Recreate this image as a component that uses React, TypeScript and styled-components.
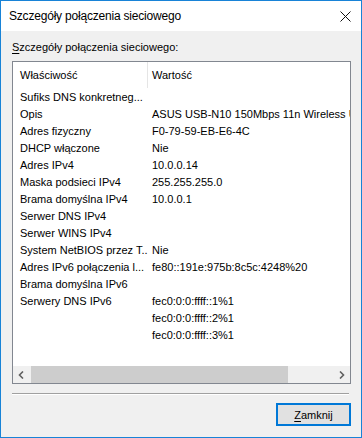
import React from "react";
import styled, { createGlobalStyle } from "styled-components";

const GlobalStyle = createGlobalStyle`
  html, body {
    margin: 0;
    padding: 0;
    background: #ffffff;
  }
  body {
    font-family: "Liberation Sans", Arial, sans-serif;
    font-size: 11px;
    color: #000;
  }
`;

const Window = styled.div`
  width: 362px;
  height: 438px;
  box-sizing: border-box;
  border: 1px solid #1883d7;
  background: #f0f0f0;
  display: flex;
  flex-direction: column;
`;

const TitleBar = styled.div`
  height: 30px;
  background: #ffffff;
  display: flex;
  align-items: center;
  justify-content: space-between;
  padding: 0 10px 0 8px;
  flex-shrink: 0;
`;

const Title = styled.div`
  font-size: 12px;
  letter-spacing: -0.2px;
  color: #000;
`;

const Body = styled.div`
  flex: 1;
  display: flex;
  flex-direction: column;
  padding: 9px 10px 0 11px;
`;

const GroupLabel = styled.div`
  line-height: 15px;
  margin-bottom: 6px;
`;

const Key = styled.span`
  text-decoration: underline;
  text-underline-offset: 2px;
`;

const ListView = styled.div`
  width: 339px;
  height: 323px;
  box-sizing: border-box;
  border: 1px solid #828790;
  background: #ffffff;
  display: flex;
  flex-direction: column;
  overflow: hidden;
`;

const Header = styled.div`
  height: 26px;
  display: flex;
  flex-shrink: 0;
`;

const HeaderCell = styled.div<{ $width?: number; $pad: number; $divider?: boolean }>`
  ${(p) => (p.$width ? `width: ${p.$width}px;` : "flex: 1;")}
  box-sizing: border-box;
  padding-left: ${(p) => p.$pad}px;
  display: flex;
  align-items: center;
  white-space: nowrap;
  border-right: ${(p) => (p.$divider ? "1px solid #e5e5e5" : "none")};
`;

const Rows = styled.div`
  flex: 1;
  overflow: hidden;
`;

const Row = styled.div`
  height: 17px;
  display: flex;
  align-items: center;
  white-space: nowrap;
`;

const Cell = styled.div<{ $width?: number; $pad: number }>`
  ${(p) => (p.$width ? `width: ${p.$width}px; flex-shrink: 0;` : "flex: 1;")}
  box-sizing: border-box;
  padding-left: ${(p) => p.$pad}px;
  overflow: hidden;
  white-space: nowrap;
`;

const ScrollBar = styled.div`
  height: 17px;
  display: flex;
  background: #f0f0f0;
  flex-shrink: 0;
`;

const ArrowButton = styled.div`
  width: 17px;
  height: 17px;
  display: flex;
  align-items: center;
  justify-content: center;
  flex-shrink: 0;
`;

const Track = styled.div`
  flex: 1;
  display: flex;
  padding-left: 1px;
`;

const Thumb = styled.div`
  height: 17px;
  background: #cdcdcd;
`;

const Separator = styled.div`
  height: 1px;
  margin: 9px 2px 0 0;
  background: #a0a0a0;
  border-bottom: 1px solid #ffffff;
`;

const Footer = styled.div`
  display: flex;
  justify-content: flex-end;
  padding-top: 8px;
`;

const Button = styled.button`
  width: 75px;
  height: 23px;
  box-sizing: border-box;
  background: #e1e1e1;
  border: 1px solid #0078d7;
  box-shadow: inset 0 0 0 1px #0078d7;
  font-family: "Liberation Sans", Arial, sans-serif;
  font-size: 11px;
  color: #000;
  padding: 0;
`;

const rows: [string, string][] = [
  ["Sufiks DNS konkretneg...", ""],
  ["Opis", "ASUS USB-N10 150Mbps 11n Wireless USB Network Adapter"],
  ["Adres fizyczny", "F0-79-59-EB-E6-4C"],
  ["DHCP włączone", "Nie"],
  ["Adres IPv4", "10.0.0.14"],
  ["Maska podsieci IPv4", "255.255.255.0"],
  ["Brama domyślna IPv4", "10.0.0.1"],
  ["Serwer DNS IPv4", ""],
  ["Serwer WINS IPv4", ""],
  ["System NetBIOS przez T...", "Nie"],
  ["Adres IPv6 połączenia l...", "fe80::191e:975b:8c5c:4248%20"],
  ["Brama domyślna IPv6", ""],
  ["Serwery DNS IPv6", "fec0:0:0:ffff::1%1"],
  ["", "fec0:0:0:ffff::2%1"],
  ["", "fec0:0:0:ffff::3%1"],
];

const Chevron = ({ dir }: { dir: "left" | "right" }) => (
  <svg width="7" height="8" viewBox="0 0 7 8">
    <path
      d={dir === "left" ? "M5 0.5 L1.5 4 L5 7.5" : "M2 0.5 L5.5 4 L2 7.5"}
      fill="none"
      stroke="#606060"
      strokeWidth="1.6"
    />
  </svg>
);

export default function App() {
  return (
    <>
      <GlobalStyle />
      <Window>
        <TitleBar>
          <Title>Szczegóły połączenia sieciowego</Title>
          <svg width="11" height="11" viewBox="0 0 11 11">
            <path d="M0.5 0.5 L10.5 10.5 M10.5 0.5 L0.5 10.5" stroke="#111" strokeWidth="1" />
          </svg>
        </TitleBar>
        <Body>
          <GroupLabel>
            <Key>S</Key>zczegóły połączenia sieciowego:
          </GroupLabel>
          <ListView>
            <Header>
              <HeaderCell $width={135} $pad={7} $divider>
                Właściwość
              </HeaderCell>
              <HeaderCell $pad={4}>Wartość</HeaderCell>
            </Header>
            <Rows>
              {rows.map(([k, v], i) => (
                <Row key={i}>
                  <Cell $width={135} $pad={7}>
                    {k}
                  </Cell>
                  <Cell $pad={4}>{v}</Cell>
                </Row>
              ))}
            </Rows>
            <ScrollBar>
              <ArrowButton>
                <Chevron dir="left" />
              </ArrowButton>
              <Track>
                <Thumb style={{ width: 257 }} />
              </Track>
              <ArrowButton>
                <Chevron dir="right" />
              </ArrowButton>
            </ScrollBar>
          </ListView>
          <Separator />
          <Footer>
            <Button>
              <Key>Z</Key>amknij
            </Button>
          </Footer>
        </Body>
      </Window>
    </>
  );
}
